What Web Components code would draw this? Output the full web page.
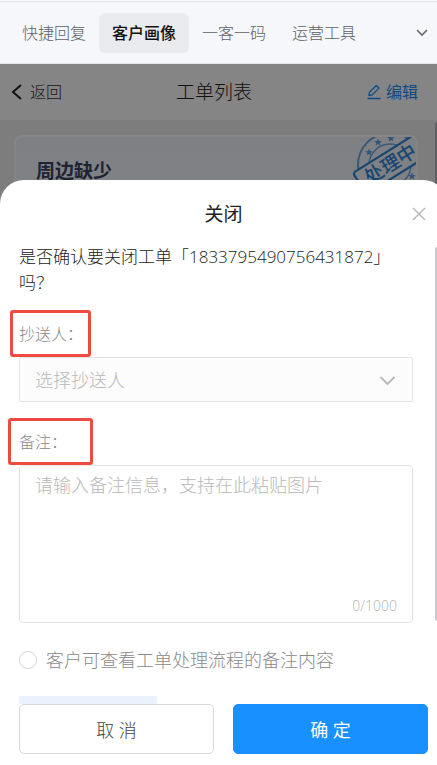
<!DOCTYPE html>
<html lang="zh-CN">
<head>
<meta charset="utf-8">
<meta name="viewport" content="width=device-width, initial-scale=1">
<title>工单列表</title>
<style>
    html, body {
        height: 100%;
        margin: 0;
    }

    body {
        font-family: "Open Sans", "Noto Sans CJK SC", sans-serif;
        font-weight: 300;
        font-size: 16px;
        color: #222;
        overflow: hidden;
    }
</style>
</head>
<body>
<ticket-app></ticket-app>

<template id="tpl-tabs">
    <style>
        :host {
            display: block;
            flex: none;
            background: #f5f7fb;
            border-bottom: 1px solid #e3e5e8;
        }

        nav {
            display: flex;
            align-items: center;
            height: 61px;
            margin-top: 1px;
            padding: 0 8px 0 9px;
            border-top: 1px solid #e3e5e8;
        }

        button {
            font: inherit;
            line-height: 24px;
            color: #5d6066;
            background: none;
            border: 0;
            border-radius: 6px;
            padding: 8px 13px;
            white-space: nowrap;
        }

        button[aria-selected="true"] {
            color: #111;
            font-weight: 500;
            background: #e9ebee;
        }

        .more {
            margin-left: auto;
            padding: 0;
            display: flex;
        }
    </style>
    <nav role="tablist">
        <button role="tab">快捷回复</button>
        <button role="tab" aria-selected="true">客户画像</button>
        <button role="tab">一客一码</button>
        <button role="tab">运营工具</button>
        <button class="more" aria-label="更多">
            <svg width="14" height="14" viewBox="0 0 14 14" fill="none" stroke="#666a70" stroke-width="1.6"><path d="M2 4l5 5 5-5"/></svg>
        </button>
    </nav>
</template>

<template id="tpl-header">
    <style>
        :host {
            display: grid;
            grid-template-columns: 1fr auto 1fr;
            align-items: center;
            height: 56px;
            padding: 0 19px 0 10px;
            background: #fff;
        }

        a {
            display: flex;
            align-items: center;
            gap: 6px;
            line-height: 24px;
            color: #333;
            text-decoration: none;
        }

        h1 {
            margin: 0;
            font-size: 19px;
            line-height: 28px;
            font-weight: 300;
        }

        .edit {
            justify-self: end;
            gap: 4px;
            color: #1890ff;
            font-weight: 400;
        }
    </style>
    <a href="#back">
        <svg width="14" height="18" viewBox="0 0 14 18" fill="none" stroke="#222" stroke-width="2"><path d="M11 2L3 9l8 7"/></svg>
        返回
    </a>
    <h1>工单列表</h1>
    <a class="edit" href="#edit">
        <svg width="16" height="16" viewBox="0 0 16 16" fill="none" stroke="#1890ff" stroke-width="1.3"><path d="M1.500 14.500h13M3 11.500l.5-3.200L10.300 1.500l2.600 2.600-6.700 6.800z"/></svg>
        编辑
    </a>
</template>

<template id="tpl-card">
    <style>
        :host {
            display: block;
            box-sizing: border-box;
            height: 200px;
            margin: 15px 19px 0 14px;
            border: 2px solid #fff;
            border-radius: 8px;
            background: linear-gradient(#f3f6fd, #f9fafd);
            overflow: hidden;
        }

        .row {
            display: flex;
            justify-content: space-between;
        }

        h2 {
            margin: 20px 0 0 20px;
            font-size: 19px;
            line-height: 28px;
            font-weight: 700;
            color: #3a4662;
        }

        text {
            font-weight: 500;
        }
    </style>
    <div class="row">
        <h2><slot></slot></h2>
        <svg width="64" height="76" viewBox="0 0 64 76" fill="none" stroke="#2f86d8">
            <circle cx="38" cy="28" r="32" stroke-width="2" opacity=".7"/>
            <circle cx="38" cy="28" r="21" stroke-width="1.4" opacity=".7"/>
            <g fill="#2f86d8" stroke="none" opacity=".75">
                <path id="star" d="M17 11.500l1 2.500 2.700.2-2.100 1.700.7 2.600-2.300-1.400-2.300 1.400.7-2.600-2.100-1.700 2.700-.2z"/>
                <use href="#star" x="9" y="-10"/>
                <use href="#star" x="22" y="-14"/>
                <use href="#star" x="43" y="24"/>
            </g>
            <g transform="translate(1 36) rotate(-32)">
                <rect width="90" height="25" rx="3" fill="#f4f7fd" stroke-width="2.2"/>
                <text x="8" y="19" font-size="19" fill="#2f86d8" stroke="none">处理中</text>
            </g>
        </svg>
    </div>
</template>

<template id="tpl-field">
    <style>
        :host {
            display: block;
        }

        label {
            position: relative;
            display: block;
            width: fit-content;
            line-height: 24px;
            margin-bottom: 11px;
            color: #8a8a8a;
        }

        /* red marker drawn round the caption */
        label::after {
            content: "";
            position: absolute;
            box-sizing: border-box;
            top: -12px;
            left: var(--mark-left, -9px);
            width: var(--mark-width, 81px);
            height: 47px;
            border: 3px solid #f04b40;
            border-radius: 3px;
            pointer-events: none;
            z-index: 1;
        }

        .box {
            display: flex;
            flex-direction: column;
            position: relative;
            border: 1px solid #e4e4e4;
            border-radius: 4px;
        }

        select, textarea {
            appearance: none;
            box-sizing: border-box;
            width: 100%;
            margin: 0;
            padding: 0 15px;
            border: 0;
            outline: 0;
            background: none;
            font: inherit;
            font-size: 18px;
            color: #b9b9b9;
            resize: none;
        }

        .box.select {
            background: #fcfcfc;
            border-radius: 2px;
        }

        select {
            height: 43px;
        }

        .box svg {
            position: absolute;
            right: 16px;
            top: 14px;
            pointer-events: none;
        }

        textarea {
            height: 124px;
            padding-top: 6px;
            line-height: 27px;
        }

        textarea::placeholder {
            color: #b9b9b9;
        }

        .count {
            align-self: flex-end;
            padding: 4px 15px;
            font-size: 14px;
            line-height: 24px;
            color: #b4b4b4;
        }
    </style>
    <label for="control"></label>
    <div class="box"></div>
</template>

<template id="tpl-sheet">
    <style>
        :host {
            display: flex;
            flex-direction: column;
            background: #fff;
            border-radius: 24px 24px 0 0;
            overflow: hidden;
        }

        header {
            position: relative;
            flex: none;
            padding: 20px 0 16px;
            text-align: center;
        }

        h2 {
            margin: 0;
            font-size: 19px;
            line-height: 28px;
            font-weight: 400;
        }

        .close {
            position: absolute;
            top: 26px;
            right: 20px;
            display: flex;
            padding: 0;
            border: 0;
            background: none;
        }

        .body {
            flex: 1;
            min-height: 0;
            overflow: hidden;
            padding: 0 34px 0 19px;
        }

        footer {
            flex: none;
            display: flex;
            gap: 19px;
            padding: 0 19px 11px;
        }
    </style>
    <header>
        <h2><slot name="title"></slot></h2>
        <button class="close" aria-label="关闭弹窗">
            <svg width="16" height="16" viewBox="0 0 16 16" stroke="#b5b5b5" stroke-width="1.4"><path d="M2 2l12 12M14 2L2 14"/></svg>
        </button>
    </header>
    <div class="body"><slot></slot></div>
    <footer><slot name="actions"></slot></footer>
</template>

<template id="tpl-button">
    <style>
        :host {
            display: block;
            flex: 1;
        }

        button {
            display: block;
            width: 100%;
            height: 50px;
            border: 1px solid #d9d9d9;
            border-radius: 5px;
            background: #fff;
            color: #444;
            font: inherit;
            font-size: 18px;
        }

        :host([primary]) button {
            border-color: #1890ff;
            background: #1890ff;
            color: #fff;
            font-weight: 400;
        }
    </style>
    <button><slot></slot></button>
</template>

<template id="tpl-app">
    <style>
        :host {
            display: flex;
            flex-direction: column;
            height: 100vh;
            overflow: hidden;
        }

        main {
            position: relative;
            flex: 1;
            overflow: hidden;
            background: #eff0f2;
        }

        .mask {
            position: absolute;
            inset: 0;
            background: rgba(0, 0, 0, .48);
        }

        .thumb {
            position: absolute;
            right: 0;
            width: 2px;
            border-radius: 2px 0 0 2px;
        }

        .thumb.page {
            top: 58px;
            height: 80px;
            background: #606063;
        }

        .thumb.inner {
            top: 183px;
            height: 374px;
            background: #c9c9ce;
        }

        /* the sheet runs on under the page scrollbar */
        bottom-sheet {
            position: absolute;
            top: 116px;
            bottom: 0;
            left: 0;
            right: -10px;
        }

        p {
            margin: 0 0 26px;
            padding-right: 10px;
            font-size: 17px;
            line-height: 26px;
        }

        form-field {
            margin-bottom: 28px;
        }

        form-field.remark {
            --mark-left: -11px;
            --mark-width: 85px;
            margin-bottom: 24px;
        }

        .check {
            display: flex;
            align-items: center;
            gap: 9px;
            font-size: 18px;
            line-height: 26px;
            color: #8a8a8a;
            white-space: nowrap;
        }

        .check input {
            appearance: none;
            flex: none;
            width: 18px;
            height: 18px;
            margin: 0;
            border: 1px solid #d6d6d6;
            border-radius: 50%;
        }

        .upload {
            display: block;
            width: 138px;
            height: 40px;
            margin-top: 23px;
            border: 0;
            border-radius: 2px;
            background: #eaf3fd;
        }
    </style>
    <app-tabs></app-tabs>
    <main>
        <page-header></page-header>
        <ticket-card>周边缺少</ticket-card>
        <div class="mask"></div>
        <div class="thumb page"></div>
        <bottom-sheet>
            <span slot="title">关闭</span>
            <p>是否确认要关闭工单「1833795490756431872」吗？</p>
            <form-field type="select" caption="抄送人：" placeholder="选择抄送人"></form-field>
            <form-field class="remark" type="textarea" caption="备注：" placeholder="请输入备注信息，支持在此粘贴图片" max="1000"></form-field>
            <label class="check"><input type="checkbox">客户可查看工单处理流程的备注内容</label>
            <button class="upload" aria-label="上传"></button>
            <sheet-button slot="actions">取 消</sheet-button>
            <sheet-button slot="actions" primary>确 定</sheet-button>
        </bottom-sheet>
        <div class="thumb inner"></div>
    </main>
</template>

<script>
class BaseElement extends HTMLElement {
    constructor() {
        super();

        const template = document.getElementById(this.constructor.template);
        this.attachShadow({mode: "open"}).append(template.content.cloneNode(true));
    }
}

class AppTabs extends BaseElement {
    static template = "tpl-tabs";
}

class PageHeader extends BaseElement {
    static template = "tpl-header";
}

class TicketCard extends BaseElement {
    static template = "tpl-card";
}

class BottomSheet extends BaseElement {
    static template = "tpl-sheet";
}

class SheetButton extends BaseElement {
    static template = "tpl-button";
}

class FormField extends BaseElement {
    static template = "tpl-field";

    connectedCallback() {
        const box = this.shadowRoot.querySelector(".box");
        const placeholder = this.getAttribute("placeholder");

        this.shadowRoot.querySelector("label").textContent = this.getAttribute("caption");

        if (this.getAttribute("type") === "select") {
            box.classList.add("select");
            box.innerHTML = `
                <select id="control"><option>${placeholder}</option></select>
                <svg width="17" height="17" viewBox="0 0 17 17" fill="none" stroke="#b8b8b8" stroke-width="1.8"><path d="M1.500 5l7 7 7-7"/></svg>
            `;
            return;
        }

        const max = this.getAttribute("max");
        box.innerHTML = `
            <textarea id="control" maxlength="${max}" placeholder="${placeholder}"></textarea>
            <span class="count">0/${max}</span>
        `;
        const area = box.querySelector("textarea");
        area.addEventListener("input", () => {
            box.querySelector(".count").textContent = `${area.value.length}/${max}`;
        });
    }
}

class TicketApp extends BaseElement {
    static template = "tpl-app";
}

customElements.define('app-tabs', AppTabs);
customElements.define('page-header', PageHeader);
customElements.define('ticket-card', TicketCard);
customElements.define('bottom-sheet', BottomSheet);
customElements.define('sheet-button', SheetButton);
customElements.define('form-field', FormField);
customElements.define('ticket-app', TicketApp);
</script>
</body>
</html>
